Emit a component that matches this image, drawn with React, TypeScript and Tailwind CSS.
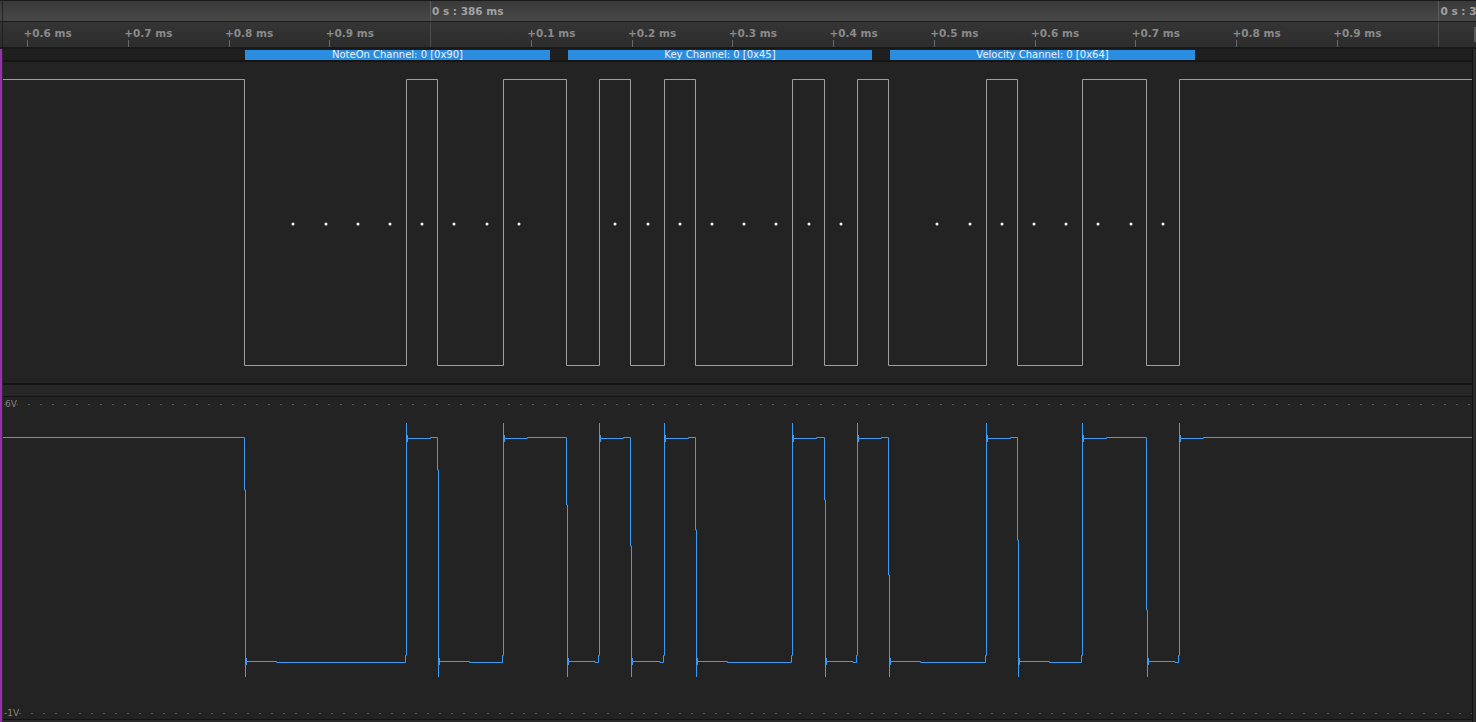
import React from "react";

const B = 32.2;
const X0 = 245;
const ex = (n: number) => Math.round(X0 + n * B);

type Edge = { n: number; up: boolean };
const edges: Edge[] = [
  { n: 0, up: false }, { n: 5, up: true }, { n: 6, up: false }, { n: 8, up: true },
  { n: 10, up: false }, { n: 11, up: true }, { n: 12, up: false }, { n: 13, up: true },
  { n: 14, up: false }, { n: 17, up: true }, { n: 18, up: false }, { n: 19, up: true },
  { n: 20, up: false }, { n: 23, up: true }, { n: 24, up: false }, { n: 26, up: true },
  { n: 28, up: false }, { n: 29, up: true },
];

const dotBits = [1, 2, 3, 4, 5, 6, 7, 8, 11, 12, 13, 14, 15, 16, 17, 18, 21, 22, 23, 24, 25, 26, 27, 28];

function digitalPath() {
  const T = 79.5;
  const Lo = 365.5;
  let d = `M 3 ${T}`;
  edges.forEach((e) => {
    const x = e.up ? ex(e.n) + 0.5 : ex(e.n) - 0.5;
    d += e.up ? ` L ${x} ${Lo} L ${x} ${T}` : ` L ${x} ${T} L ${x} ${Lo}`;
  });
  d += ` L 1472 ${T}`;
  return d;
}

const fallOffsets = [490, 470, 505, 546, 530, 500, 575, 540, 610];

function analogPath() {
  const H = 437.5;
  const L = 662.5;
  let d = `M 3 ${H}`;
  let fi = 0;
  edges.forEach((e, i) => {
    const x = ex(e.n) + 0.5;
    const next = i + 1 < edges.length ? ex(edges[i + 1].n) : 1472;
    if (!e.up) {
      const off = fallOffsets[fi++ % fallOffsets.length];
      const step = Math.min(x + 31, next - 4);
      d += ` L ${x - 1} ${H} L ${x - 1} ${off} L ${x} ${off} L ${x} 677 L ${x} 661.5 L ${step} 661.5 L ${step} ${L}`;
    } else {
      const step = Math.min(x + 24, next - 4);
      d += ` L ${x - 1} ${L} L ${x - 1} 655.5 L ${x} 655.5 L ${x} 423 L ${x} 438.5 L ${step} 438.5 L ${step} ${H}`;
    }
  });
  d += ` L 1472 ${H}`;
  return d;
}

function blobPath() {
  let d = "";
  edges.forEach((e) => {
    const x = ex(e.n) + 0.5;
    if (!e.up) d += ` M ${x + 1} 658 L ${x + 1} 665`;
    else d += ` M ${x + 1} 435 L ${x + 1} 442`;
  });
  return d;
}

const rulerCells = Array.from({ length: 14 }, (_, i) => {
  if (i === 4) return { major: true, label: "" };
  if (i < 4) return { major: false, label: `+0.${6 + i} ms` };
  return { major: false, label: `+0.${i - 4} ms` };
});

const bars = [
  { ml: "ml-[242px]", w: "w-[305px]", text: "NoteOn Channel: 0 [0x90]" },
  { ml: "ml-[18px]", w: "w-[304px]", text: "Key Channel: 0 [0x45]" },
  { ml: "ml-[18px]", w: "w-[305px]", text: "Velocity Channel: 0 [0x64]" },
];

export default function App() {
  return (
    <div className="w-[1476px] h-[722px] overflow-hidden flex flex-col bg-[#232323] font-['DejaVu_Sans',sans-serif] select-none">
      {/* Header */}
      <div className="h-[22px] shrink-0 flex border-y border-[#1b1b1b] bg-linear-to-b from-[#3a3a3a] to-[#484848]">
        <div className="w-[2px] shrink-0" />
        <div className="w-px shrink-0 bg-[#242424]" />
        <div className="w-[427px] shrink-0" />
        <div className="w-[1007.5px] shrink-0 border-l border-[#5c5c5c] pl-[1px] pt-[5px] text-[10.5px] leading-[10.5px] font-bold text-[#a2a2a2] whitespace-nowrap">
          0 s : 386 ms
        </div>
        <div className="flex-1 min-w-0 overflow-hidden border-l border-[#5c5c5c] pl-[2px] pt-[5px] text-[10.5px] leading-[10.5px] font-bold text-[#a2a2a2] whitespace-nowrap">
          0 s : 387 ms
        </div>
      </div>

      {/* Ruler */}
      <div className="h-[25px] shrink-0 flex bg-linear-to-b from-[#353535] to-[#2d2d2d]">
        <div className="w-[2px] shrink-0" />
        <div className="w-px shrink-0 bg-[#1e1e1e]" />
        <div className="w-[24px] shrink-0" />
        {rulerCells.map((c, i) =>
          c.major ? (
            <div key={i} className="w-[100.75px] shrink-0 border-l border-[#4c4c4c]" />
          ) : (
            <div key={i} className="w-[100.75px] shrink-0 flex flex-col">
              <div className="pt-[6px] -ml-[3.5px] text-[10.5px] leading-[10.5px] font-bold text-[#8a8a8a] whitespace-nowrap">
                {c.label}
              </div>
              <div className="mt-auto w-px h-[7px] bg-[#686868]" />
            </div>
          )
        )}
        <div className="flex-1 flex items-center justify-end border-l border-[#4c4c4c]">
          <div className="w-[2px] h-[15px] bg-[#5a5a5a]" />
        </div>
      </div>

      <div className="h-[2px] shrink-0 bg-[#191919]" />

      {/* Body */}
      <div className="flex flex-1 min-h-0">
        <div className="w-[2px] shrink-0 bg-[#9c2cb0]" />
        <div className="w-px shrink-0 bg-[#2c2c2c]" />
        <div className="w-[1469px] shrink-0 flex flex-col">
          {/* Annotation row */}
          <div className="h-[11px] shrink-0 bg-[#1f1f1f] pt-px flex">
            {bars.map((b, i) => (
              <div
                key={i}
                className={`${b.ml} ${b.w} shrink-0 h-[10px] bg-[#2b8de0] text-center text-[10px] leading-[9px] text-[#f0f0f0] whitespace-nowrap overflow-hidden`}
              >
                {b.text}
              </div>
            ))}
          </div>
          <div className="h-[2px] shrink-0 bg-[#151515]" />

          {/* Digital channel */}
          <div className="h-[321px] shrink-0 bg-[#232323]">
            <svg width={1469} height={321} viewBox="3 62 1469 321" className="block">
              <path d={digitalPath()} fill="none" stroke="#9e9e9e" strokeWidth={1} />
              {dotBits.map((n) => (
                <circle key={n} cx={Math.round(X0 + (n + 0.5) * B)} cy={224} r={1.5} fill="#f4f4f4" />
              ))}
            </svg>
          </div>

          {/* Separator */}
          <div className="h-[2px] shrink-0 bg-[#131313]" />
          <div className="h-[11px] shrink-0 bg-[#272727]" />
          <div className="h-px shrink-0 bg-[#131313]" />

          {/* Analog channel */}
          <div className="h-[322px] shrink-0 relative bg-[#232323]">
            <svg width={1469} height={322} viewBox="3 397 1469 322" className="block">
              <line x1={4} y1={404.5} x2={1472} y2={404.5} stroke="#575757" strokeWidth={1} strokeDasharray="2 10" />
              <line x1={7} y1={713.5} x2={1472} y2={713.5} stroke="#575757" strokeWidth={1} strokeDasharray="2 10" />
              <path d={analogPath()} fill="none" stroke="#3d9cf2" strokeWidth={1} />
              <path d={blobPath()} fill="none" stroke="#3d9cf2" strokeWidth={1} />
            </svg>
            <span className="absolute left-[2px] top-[3px] text-[9px] leading-[9px] text-[#858585] bg-[#232323]">
              6V
            </span>
            <span className="absolute left-[1px] top-[312px] text-[9px] leading-[9px] text-[#858585] bg-[#232323]">
              -1V
            </span>
          </div>
          <div className="h-px shrink-0 bg-[#131313]" />
          <div className="h-[2px] shrink-0 bg-[#2a2a2a]" />
        </div>
        <div className="w-px shrink-0 bg-[#111111]" />
        <div className="w-[3px] shrink-0 bg-[#2c2c2c]" />
      </div>
    </div>
  );
}
